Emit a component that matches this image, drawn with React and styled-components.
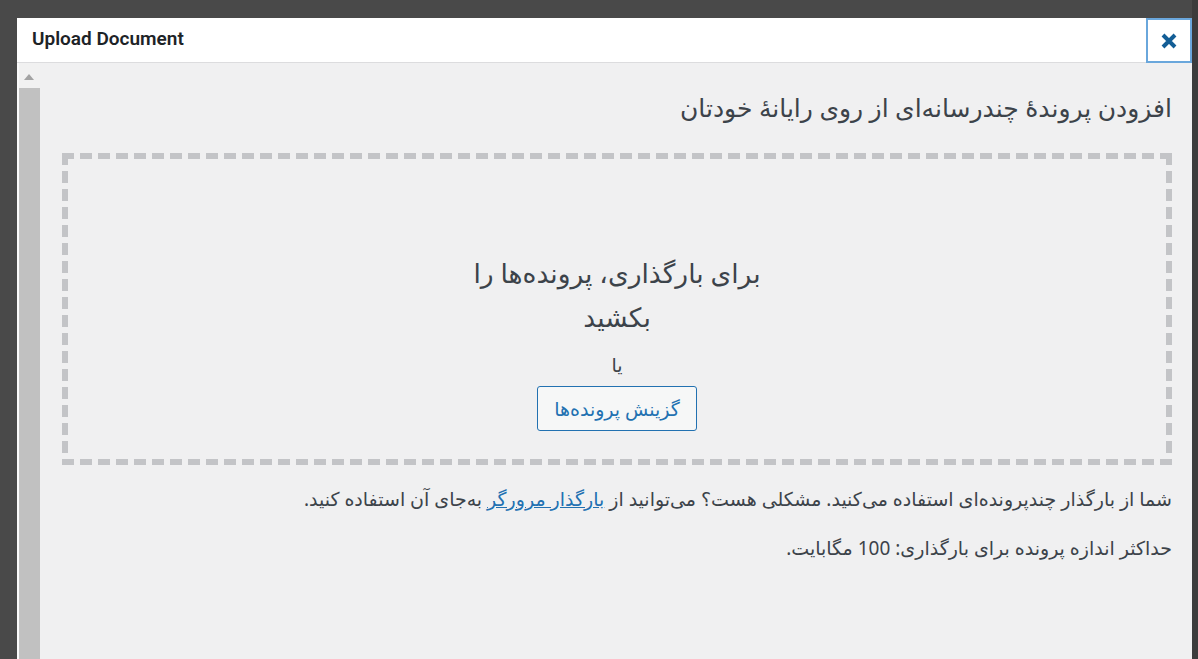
import React from 'react'
import styled, { createGlobalStyle } from 'styled-components'

const GlobalStyle = createGlobalStyle`
  html, body {
    margin: 0;
    padding: 0;
    background: #474747;
  }
  * { box-sizing: border-box; }
`

const fa = `"Noto Sans", "DejaVu Sans", sans-serif`

function CloseIcon() {
  return (
    <svg width="18" height="18" viewBox="0 0 18 18">
      <path d="M3 3 L15 15 M15 3 L3 15" stroke="#135e96" strokeWidth="4" strokeLinecap="butt" />
    </svg>
  )
}

function App() {
  return (
    <Backdrop>
      <GlobalStyle />
      <Modal>
        <Header>
          <HeaderTitle>Upload Document</HeaderTitle>
          <CloseButton aria-label="close"><CloseIcon /></CloseButton>
        </Header>
        <Body>
          <Scrollbar>
            <ArrowUp />
            <Thumb />
          </Scrollbar>
          <Content>
            <PageTitle>افزودن پروندهٔ چندرسانه‌ای از روی رایانهٔ خودتان</PageTitle>
            <DropZone>
              <DropTitle>برای بارگذاری، پرونده‌ها را بکشید</DropTitle>
              <Or>یا</Or>
              <SelectButton>گزینش پرونده‌ها</SelectButton>
            </DropZone>
            <Note>
              شما از بارگذار چندپرونده‌ای استفاده می‌کنید. مشکلی هست؟ می‌توانید از <a href="#">بارگذار مرورگر</a> به‌جای آن استفاده کنید.
            </Note>
            <Note $gap={25}>حداکثر اندازه پرونده برای بارگذاری: 100 مگابایت.</Note>
          </Content>
        </Body>
      </Modal>
      <SideStrip />
    </Backdrop>
  )
}

export default App

const Backdrop = styled.div`
  height: 659px;
  overflow: hidden;
  display: flex;
  padding: 18px 0 0 17px;
  background: #494949;
`

const Modal = styled.div`
  flex: 1;
  display: flex;
  flex-direction: column;
  background: #f0f0f1;
`

const SideStrip = styled.div`
  width: 6px;
  margin-top: -18px;
  background: #3c3c3c;
`

const Header = styled.div`
  height: 45px;
  flex: none;
  display: flex;
  align-items: center;
  justify-content: space-between;
  background: #fff;
  border-bottom: 1px solid #dcdcde;
`

const HeaderTitle = styled.h1`
  margin: 0 0 3px 15px;
  font-family: Roboto, "Liberation Sans", sans-serif;
  font-size: 19px;
  font-weight: 600;
  color: #1d2327;
`

const CloseButton = styled.button`
  width: 46px;
  height: 45px;
  align-self: flex-start;
  display: flex;
  align-items: center;
  justify-content: center;
  padding: 0;
  background: #fff;
  border: 2px solid #6aa7dc;
  cursor: pointer;
`

const Body = styled.div`
  flex: 1;
  display: flex;
  min-height: 0;
  border-left: 2px solid #fafafa;
`

const Scrollbar = styled.div`
  width: 21px;
  flex: none;
  display: flex;
  flex-direction: column;
  background: #f1f1f1;
`

const ArrowUp = styled.div`
  height: 25px;
  position: relative;
  &::after {
    content: '';
    position: absolute;
    left: 5px;
    top: 11px;
    border-left: 5.5px solid transparent;
    border-right: 5.5px solid transparent;
    border-bottom: 6px solid #a3a3a3;
  }
`

const Thumb = styled.div`
  flex: 1;
  background: #c1c1c1;
`

const Content = styled.div`
  flex: 1;
  direction: rtl;
  padding: 28px 20px 0 22px;
  font-family: ${fa};
  color: #3c434a;
`

const PageTitle = styled.h2`
  margin: 0;
  font-size: 25px;
  line-height: 33px;
  font-weight: 400;
  color: #3c434a;
`

const DropZone = styled.div`
  margin-top: 29px;
  height: 312px;
  padding-top: 98px;
  text-align: center;
  background:
    repeating-linear-gradient(90deg, #c3c4c7 0 12px, transparent 12px 18px) left top / 100% 6px no-repeat,
    repeating-linear-gradient(90deg, #c3c4c7 0 12px, transparent 12px 18px) left bottom / 100% 6px no-repeat,
    repeating-linear-gradient(180deg, #c3c4c7 0 12px, transparent 12px 18px) left top / 6px 100% no-repeat,
    repeating-linear-gradient(180deg, #c3c4c7 0 12px, transparent 12px 18px) right top / 6px 100% no-repeat;
`

const DropTitle = styled.p`
  margin: 0 auto;
  max-width: 330px;
  font-size: 26.5px;
  line-height: 44px;
  color: #3c434a;
`

const Or = styled.p`
  margin: 14px 0 0;
  font-size: 19px;
  line-height: 24px;
`

const SelectButton = styled.button`
  margin-top: 9px;
  height: 45px;
  padding: 0 16px;
  font-family: ${fa};
  font-size: 19px;
  color: #2271b1;
  background: #f6f7f7;
  border: 1px solid #2271b1;
  border-radius: 3px;
  cursor: pointer;
`

const Note = styled.p`
  margin: ${p => p.$gap || 22}px 0 0;
  font-size: 19px;
  line-height: 24px;
  a {
    color: #2271b1;
    text-decoration: underline;
  }
`
